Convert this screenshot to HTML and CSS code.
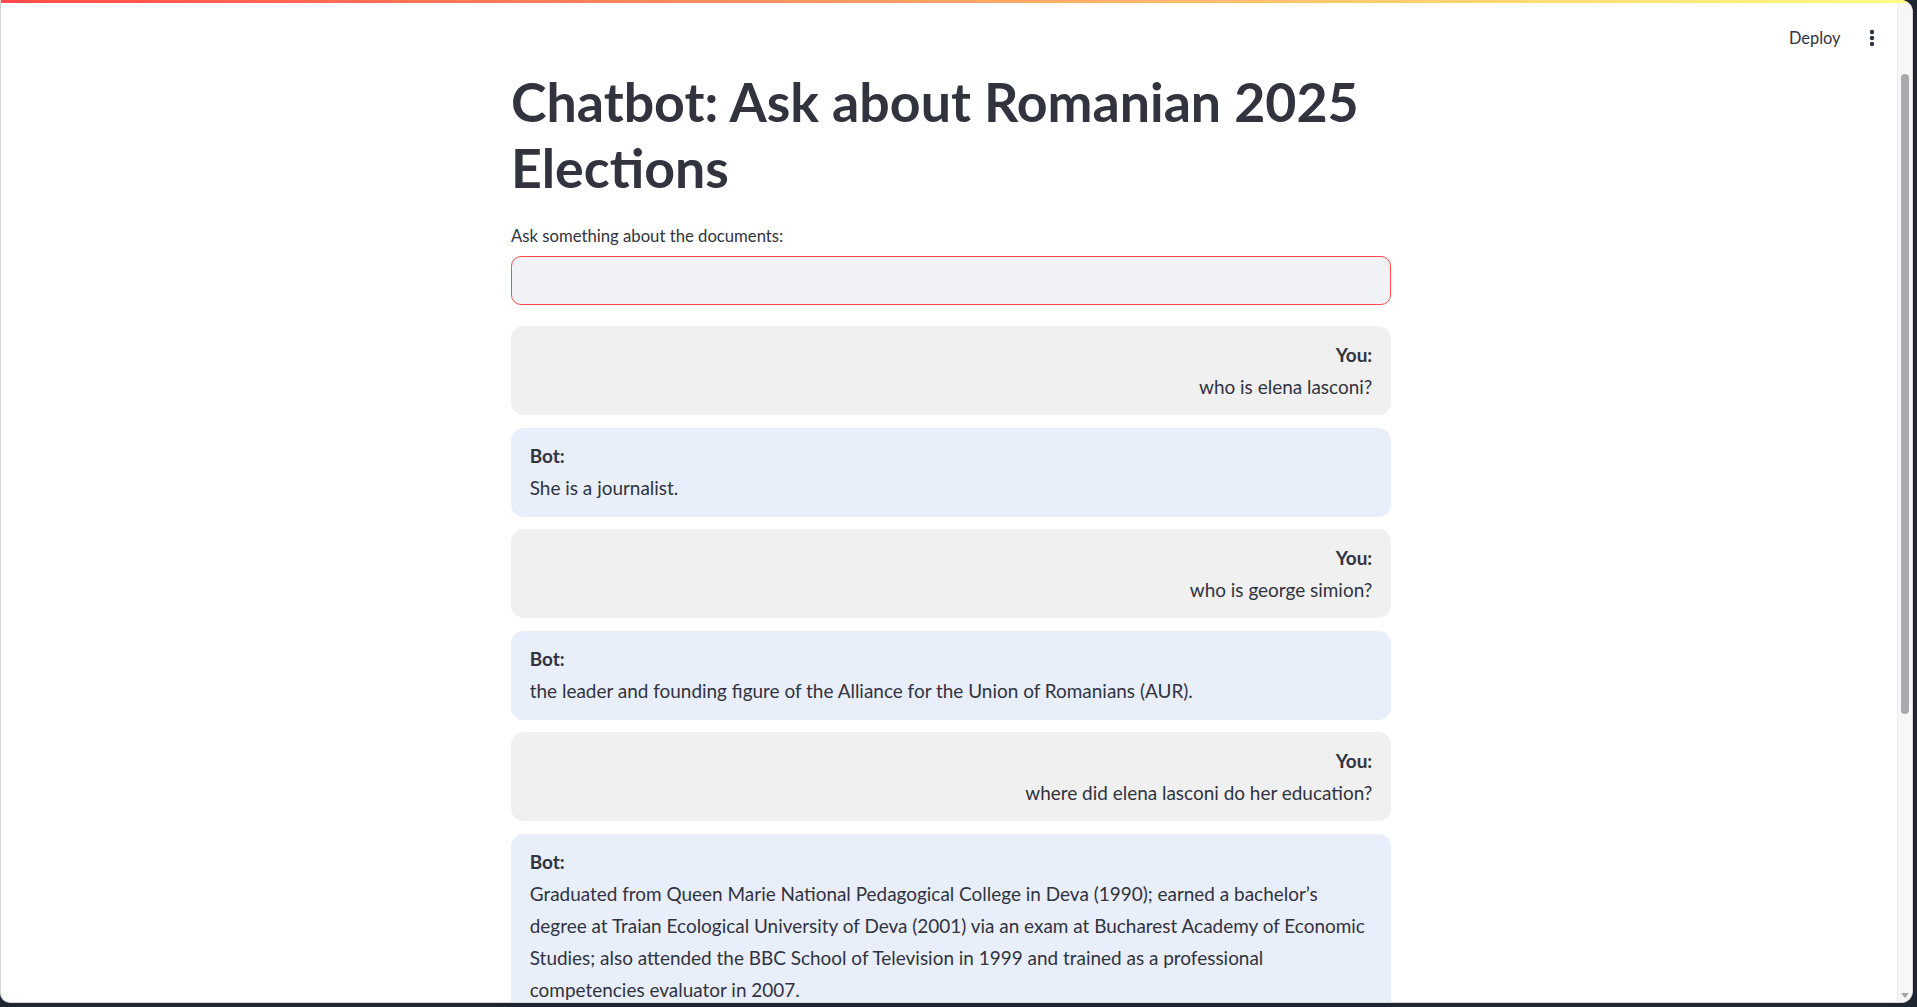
FILE: index.html
```html
<!DOCTYPE html>
<html lang="en">
<head>
<meta charset="utf-8">
<title>Chatbot: Ask about Romanian 2025 Elections</title>
<link rel="stylesheet" href="styles.css">
</head>
<body>
<div class="window">
  <div class="decoration"></div>
  <div class="frame">
    <main class="main">
      <div class="block">
        <h1 class="title">Chatbot: Ask about Romanian 2025 Elections</h1>
        <label class="field-label" for="q">Ask something about the documents:</label>
        <div class="field"><input id="q" class="field-input" type="text"></div>
        <div class="chat">
          <div class="msg msg-user"><b>You:</b><br>who is elena lasconi?</div>
          <div class="msg msg-bot"><b>Bot:</b><br>She is a journalist.</div>
          <div class="msg msg-user"><b>You:</b><br>who is george simion?</div>
          <div class="msg msg-bot"><b>Bot:</b><br>the leader and founding figure of the Alliance for the Union of Romanians (AUR).</div>
          <div class="msg msg-user"><b>You:</b><br>where did elena lasconi do her education?</div>
          <div class="msg msg-bot"><b>Bot:</b><br>Graduated from Queen Marie National Pedagogical College in Deva (1990); earned a bachelor’s degree at Traian Ecological University of Deva (2001) via an exam at Bucharest Academy of Economic Studies; also attended the BBC School of Television in 1999 and trained as a professional competencies evaluator in 2007.</div>
        </div>
      </div>
    </main>
    <div class="scrollbar">
      <div class="scroll-thumb"></div>
      <div class="scroll-arrow"></div>
    </div>
  </div>
  <header class="toolbar">
    <span class="deploy">Deploy</span>
    <svg class="menu" width="20" height="20" viewBox="0 0 20 20" aria-hidden="true">
      <circle cx="10" cy="4" r="2.2" fill="#31333f"/>
      <circle cx="10" cy="10" r="2.2" fill="#31333f"/>
      <circle cx="10" cy="16" r="2.2" fill="#31333f"/>
    </svg>
  </header>
</div>
</body>
</html>
```

FILE: styles.css
```css
* { box-sizing: border-box; }

html, body {
  margin: 0;
  padding: 0;
  height: 100%;
  overflow: hidden;
}

body {
  background: #1f2631;
  font-family: "Lato", "Noto Sans", sans-serif;
  color: #31333f;
}

.window {
  position: relative;
  height: 1003px;
  width: 1913px;
  background: #ffffff;
  border: 1px solid #d6d6d6;
  border-top: none;
  border-radius: 0 12px 12px 10px;
  display: flex;
  flex-direction: column;
  overflow: hidden;
}

.decoration {
  height: 3px;
  flex: none;
  background: linear-gradient(90deg, #ff4b4b, #fffd80);
}

.frame {
  flex: 1;
  display: flex;
  min-height: 0;
}

.main {
  flex: 1;
  min-width: 0;
  padding-top: 65px;
  padding-left: 4px;
}

.block {
  width: 880px;
  margin: 0 auto;
}

.title {
  margin: 0;
  font-size: 53.7px;
  line-height: 66px;
  font-weight: 700;
  color: #31333f;
}

.field-label {
  display: block;
  margin-top: 22px;
  font-size: 16.7px;
  line-height: 28px;
  color: #31333f;
}

.field {
  margin-top: 6px;
  height: 49px;
  border: 1px solid #ff4b4b;
  border-radius: 10px;
  background: #f0f2f6;
}

.field-input {
  width: 100%;
  height: 100%;
  border: none;
  outline: none;
  background: transparent;
  font: inherit;
  font-size: 19px;
  padding: 0 16px;
}

.chat {
  margin-top: 21px;
  font-size: 18.95px;
  line-height: 32px;
}

.msg {
  padding: 12.5px 18.75px;
  border-radius: 12.5px;
  margin-bottom: 12.5px;
}

.msg b { font-weight: 700; }

.msg-user {
  background: #f0f0f0;
  text-align: right;
}

.msg-bot {
  background: #e8eefa;
  text-align: left;
}

.scrollbar {
  position: relative;
  width: 15px;
  flex: none;
  background: #f7f7f7;
  border-left: 1px solid #ececec;
}

.scroll-thumb {
  position: absolute;
  left: 3px;
  top: 71px;
  width: 8px;
  height: 640px;
  border-radius: 4px;
  background: #a9a9ae;
}

.scroll-arrow {
  position: absolute;
  left: 3px;
  bottom: 4px;
  width: 0;
  height: 0;
  border-left: 4px solid transparent;
  border-right: 4px solid transparent;
  border-top: 5px solid #a3a3a3;
}

.toolbar {
  position: absolute;
  top: 28px;
  right: 30px;
  display: flex;
  align-items: center;
  gap: 21.5px;
  height: 20px;
}

.deploy {
  font-size: 16.4px;
  line-height: 20px;
  color: #31333f;
}

.menu { display: block; }
```
